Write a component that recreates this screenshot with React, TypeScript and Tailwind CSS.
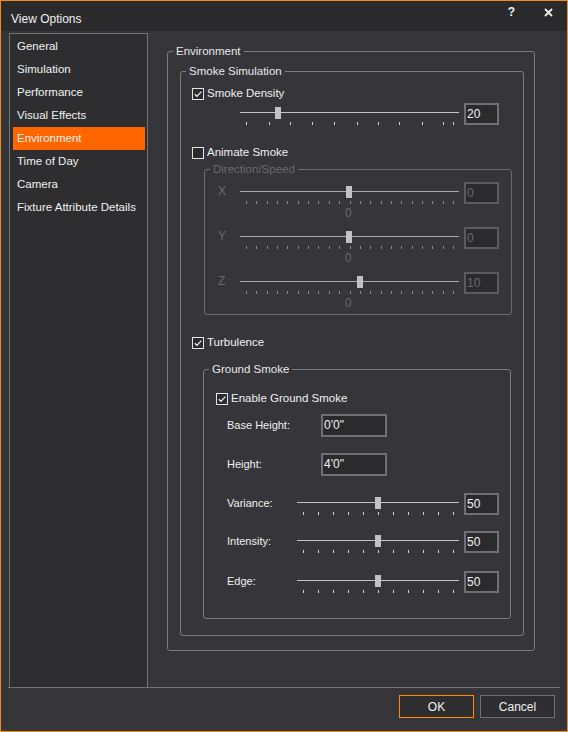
import type { ReactNode } from "react";

const NAV = [
  "General",
  "Simulation",
  "Performance",
  "Visual Effects",
  "Environment",
  "Time of Day",
  "Camera",
  "Fixture Attribute Details",
];

const range = (n: number, f: (i: number) => number) => Array.from({ length: n }, (_, i) => f(i));

const DENSITY_TICKS = [6, 29, 50, 72, 94, 117, 138, 159, 182, 203, 213];
const DIR_TICKS = range(21, (i) => 6 + Math.round(i * 10.35));
const GROUND_TICKS = range(11, (i) => 6 + i * 15);

function Slider({ width, thumb, ticks, disabled }: { width: number; thumb: number; ticks: number[]; disabled?: boolean }) {
  const line = disabled ? "#a8a8a8" : "#c4c4c4";
  return (
    <svg width={width} height={22} shapeRendering="crispEdges" className="shrink-0">
      <rect x={0} y={9} width={width} height={1} fill={line} />
      {ticks.map((t) => (
        <rect key={t} x={t} y={19} width={1} height={3} fill={disabled ? "#8a8a8a" : "#d0d0d0"} />
      ))}
      <rect x={thumb} y={4} width={6} height={12} fill="#c2c2c2" />
    </svg>
  );
}

function NumBox({ value, disabled, w = "w-[35px]" }: { value: string; disabled?: boolean; w?: string }) {
  return (
    <div
      className={`${w} h-[22px] shrink-0 border-2 bg-[#2b2b2e] pl-[1px] text-[12px] leading-[18px] ${
        disabled ? "border-[#5c5c5e] text-[#6a6a6a]" : "border-[#707072] text-[#f0f0f0]"
      }`}
    >
      {value}
    </div>
  );
}

function Check({ checked, label }: { checked: boolean; label: string }) {
  return (
    <div className="flex h-4 items-center gap-[3px]">
      <span className="flex h-[12px] w-[12px] items-center justify-center border border-[#e4e4e4] bg-[#2b2b2e]">
        {checked && (
          <svg width="10" height="10" viewBox="0 0 10 10">
            <path d="M1.8 5.2 L4 7.4 L8.3 2.6" fill="none" stroke="#f0f0f0" strokeWidth="1.3" />
          </svg>
        )}
      </span>
      <span className="text-[11.5px] text-[#f0f0f0]">{label}</span>
    </div>
  );
}

function Group({ title, className, disabled, children }: { title: string; className: string; disabled?: boolean; children: ReactNode }) {
  return (
    <fieldset className={`rounded-[3px] border ${disabled ? "border-[#6c6c6e]" : "border-[#7c7c7e]"} ${className}`}>
      <legend
        className={`ml-[5px] h-[14px] px-[3px] text-[11.5px] leading-[14px] ${
          disabled ? "text-[#6a6a6a]" : "text-[#e8e8e8]"
        }`}
      >
        {title}
      </legend>
      {children}
    </fieldset>
  );
}

function AxisRow({ axis, thumb, value, className }: { axis: string; thumb: number; value: string; className: string }) {
  return (
    <div className={className}>
      <div className="flex h-[22px] items-start">
        <span className="ml-[13px] w-[22px] pt-[2px] text-[12px] leading-[14px] text-[#6a6a6a]">{axis}</span>
        <Slider width={219} thumb={thumb} ticks={DIR_TICKS} disabled />
        <div className="ml-[5px]">
          <NumBox value={value} disabled />
        </div>
      </div>
      <div className="mt-[2px] h-[14px] pl-[140px] text-[12px] leading-[14px] text-[#6a6a6a]">0</div>
    </div>
  );
}

function GroundSlider({ label, className }: { label: string; className: string }) {
  return (
    <div className={`flex h-[22px] items-start ${className}`}>
      <span className="ml-[23px] w-[70px] pt-[3px] leading-[14px] text-[#f0f0f0]">{label}</span>
      <Slider width={162} thumb={78} ticks={GROUND_TICKS} />
      <div className="ml-[5px]">
        <NumBox value="50" />
      </div>
    </div>
  );
}

function TextRow({ label, value, className }: { label: string; value: string; className: string }) {
  return (
    <div className={`flex h-[23px] items-center ${className}`}>
      <span className="ml-[23px] w-[94px] text-[#f0f0f0]">{label}</span>
      <NumBox value={value} w="w-[66px] h-[23px]" />
    </div>
  );
}

export default function App() {
  return (
    <div
      className="flex h-[732px] w-[568px] flex-col border border-[#f28a1e] bg-[#35353a] text-[11px] text-[#f0f0f0]"
      style={{ fontFamily: '"Liberation Sans", Arial, sans-serif' }}
    >
      {/* title bar */}
      <div className="flex h-[30px] shrink-0 bg-[#2a2a2d]">
        <span className="pl-[10px] pt-[11px] text-[12px] leading-[14px]">View Options</span>
        <span className="ml-auto pt-[4px] text-[12px] font-bold leading-[14px]">?</span>
        <span className="ml-[29px] mr-[14px] pt-[7px]">
          <svg width="9" height="9" viewBox="0 0 9 9">
            <path d="M1 1 L8 8 M8 1 L1 8" stroke="#f0f0f0" strokeWidth="1.8" />
          </svg>
        </span>
      </div>

      <div className="flex min-h-0 flex-1">
        {/* nav */}
        <div className="ml-[8px] mt-[2px] w-[139px] shrink-0 border-l border-r border-t border-[#737375] bg-[#2e2e31] pt-[1px] text-[11.5px]">
          {NAV.map((n) => (
            <div
              key={n}
              className={`ml-[3px] mr-[2px] flex h-[23px] items-center pl-[4px] ${
                n === "Environment" ? "bg-[#ff6600]" : ""
              }`}
            >
              {n}
            </div>
          ))}
        </div>

        {/* content */}
        <div className="flex-1 pt-[13px]">
          <Group title="Environment" className="ml-[19px] w-[368px] pb-[14px]">
            <Group title="Smoke Simulation" className="ml-[12px] mt-[6px] w-[344px] pb-[16px]">
              <div className="ml-[11px] mt-[8px]">
                <Check checked label="Smoke Density" />
              </div>
              <div className="ml-[59px] mt-[1px] flex h-[22px] items-start">
                <Slider width={219} thumb={35} ticks={DENSITY_TICKS} />
                <div className="ml-[5px]">
                  <NumBox value="20" />
                </div>
              </div>
              <div className="ml-[11px] mt-[20px]">
                <Check checked={false} label="Animate Smoke" />
              </div>
              <Group title="Direction/Speed" disabled className="ml-[23px] mt-[1px] w-[308px] pb-[4px]">
                <AxisRow axis="X" thumb={106} value="0" className="mt-[6px]" />
                <AxisRow axis="Y" thumb={106} value="0" className="mt-[7px]" />
                <AxisRow axis="Z" thumb={117} value="10" className="mt-[7px]" />
              </Group>
              <div className="ml-[11px] mt-[20px]">
                <Check checked label="Turbulence" />
              </div>
              <Group title="Ground Smoke" className="ml-[22px] mt-[11px] w-[308px] pb-[25px]">
                <div className="ml-[12px] mt-[15px]">
                  <Check checked label="Enable Ground Smoke" />
                </div>
                <TextRow label="Base Height:" value={"0'0\""} className="mt-[7px]" />
                <TextRow label="Height:" value={"4'0\""} className="mt-[16px]" />
                <GroundSlider label="Variance:" className="mt-[17px]" />
                <GroundSlider label="Intensity:" className="mt-[16px]" />
                <GroundSlider label="Edge:" className="mt-[18px]" />
              </Group>
            </Group>
          </Group>
        </div>
      </div>

      {/* footer */}
      <div className="ml-[7px] mr-[7px] h-px shrink-0 bg-[#737375]" />
      <div className="flex h-[43px] shrink-0 justify-end gap-[6px] pr-[12px] pt-[7px] text-[12px]">
        <button className="h-[23px] w-[75px] border border-[#ff8c00] bg-[#2e2e31] text-[#f0f0f0]">OK</button>
        <button className="h-[23px] w-[75px] border border-[#707072] bg-[#2e2e31] text-[#f0f0f0]">Cancel</button>
      </div>
    </div>
  );
}
